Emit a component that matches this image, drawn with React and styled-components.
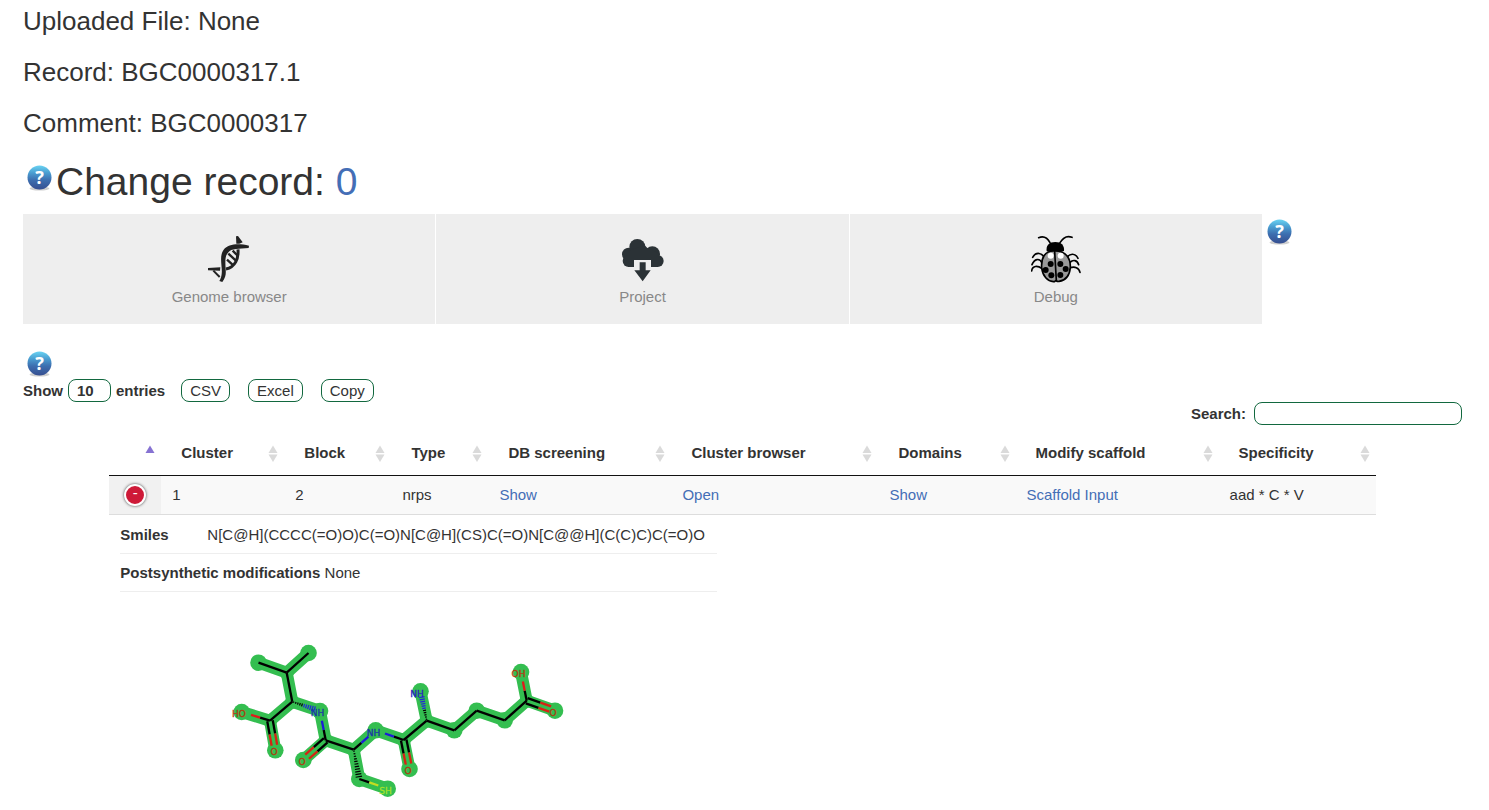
import React from "react";
import styled, { createGlobalStyle } from "styled-components";

const GlobalStyle = createGlobalStyle`
  *, *::before, *::after { box-sizing: border-box; }
  body {
    margin: 0;
    background: #fff;
    color: #333;
    font-family: "Liberation Sans", Arial, sans-serif;
    font-size: 15px;
    line-height: 22px;
  }
  button, input, select { font: inherit; color: inherit; }
`;

const Page = styled.main`
  padding: 7px 27px 0 23px;
`;

const RecordLine = styled.h3`
  margin: 0 0 22px;
  font-size: 26px;
  line-height: 29px;
  font-weight: 400;
`;

const ChangeRecord = styled.div`
  display: flex;
  align-items: flex-start;
  padding: 0 0 10px 4px;
`;

const ChangeTitle = styled.h1`
  margin: 0 0 0 4px;
  font-size: 39px;
  line-height: 44px;
  font-weight: 400;
`;

const Link = styled.a`
  color: #446eb6;
  text-decoration: none;
`;

const HelpButton = styled.button`
  display: block;
  width: 25px;
  height: 26px;
  padding: 0;
  border: 0;
  background: none;
  margin-top: ${(p) => p.$top || 0}px;
  svg { display: block; }
`;

const TileBar = styled.div`
  display: flex;
`;

const Tiles = styled.nav`
  flex: 1;
  display: grid;
  grid-template-columns: repeat(3, 1fr);
  gap: 1px;
`;

const TileAside = styled.div`
  width: 200px;
  padding-left: 5px;
`;

const Tile = styled.a`
  display: flex;
  flex-direction: column;
  align-items: center;
  height: 110px;
  padding-top: 20px;
  background: #eee;
  color: #888;
  text-decoration: none;
  svg { display: block; margin-bottom: 2px; }
`;

const TableHelp = styled.div`
  padding: 27px 0 2px 4px;
`;

const Controls = styled.div`
  display: flex;
  align-items: center;
`;

const LengthLabel = styled.label`
  display: flex;
  align-items: center;
  gap: 5px;
  margin-right: 16px;
  font-weight: 700;
`;

const LengthSelect = styled.select`
  appearance: none;
  width: 43px;
  height: 23px;
  padding: 0 8px;
  border: 1px solid #12683f;
  border-radius: 8px;
  background: #fff;
`;

const ExportButtons = styled.div`
  display: flex;
  gap: 18px;
`;

const ExportButton = styled.button`
  height: 23px;
  padding: 0 8px;
  border: 1px solid #12683f;
  border-radius: 8px;
  background: #fff;
  line-height: 21px;
`;

const SearchRow = styled.div`
  display: flex;
  justify-content: flex-end;
`;

const SearchLabel = styled.label`
  display: flex;
  align-items: center;
  gap: 8px;
  font-weight: 700;
`;

const SearchInput = styled.input`
  width: 208px;
  height: 23px;
  padding: 0 8px;
  border: 1px solid #12683f;
  border-radius: 8px;
  background: #fff;
`;

const ClusterTable = styled.table`
  width: 88%;
  margin: 6px auto 0;
  table-layout: fixed;
  border-collapse: separate;
  border-spacing: 0;
`;

const HeadCell = styled.th`
  height: 45px;
  padding: 0 6px 0 20px;
  border-bottom: 1px solid #111;
  text-align: left;
`;

const SortButton = styled.button`
  display: flex;
  justify-content: space-between;
  align-items: center;
  width: 100%;
  padding: 0;
  border: 0;
  background: none;
  font-weight: 700;
  text-align: left;
  white-space: nowrap;
`;

const Cell = styled.td`
  height: 39px;
  padding: ${(p) => (p.$toggle ? "0 15px" : "0 11px")};
  border-bottom: 1px solid #ddd;
  background: ${(p) => (p.$toggle ? "#f1f1f1" : "#f9f9f9")};
  white-space: nowrap;
`;

const ToggleButton = styled.button`
  display: block;
  width: 22px;
  height: 22px;
  padding: 0 0 5px;
  border: 2px solid #fff;
  border-radius: 50%;
  background: #ce1a38;
  box-shadow: 0 0 3px #444;
  color: #fff;
  font-size: 15px;
  line-height: 12px;
`;

const DetailCell = styled.td`
  padding: 1px 11px 0;
`;

const DetailTable = styled.table`
  width: 597px;
  border-collapse: separate;
  border-spacing: 0;
`;

const DetailItem = styled.td`
  height: 38px;
  padding: 0;
  border-bottom: 1px solid #eee;
  white-space: nowrap;
`;

const DetailName = styled.th`
  height: 38px;
  width: 87px;
  padding: 0;
  border-bottom: 1px solid #eee;
  text-align: left;
`;

const Molecule = styled.svg`
  display: block;
  margin-top: 38px;
`;

function Help({ id, top }) {
  return (
    <HelpButton type="button" aria-label="Help" $top={top}>
      <svg width="25" height="26" viewBox="0 0 25 26">
        <defs>
          <linearGradient id={id} x1="0" y1="0" x2="0" y2="1">
            <stop offset="0" stopColor="#69d3f2" />
            <stop offset="0.3" stopColor="#4b9fd2" />
            <stop offset="0.6" stopColor="#3d6fb0" />
            <stop offset="1" stopColor="#364e90" />
          </linearGradient>
        </defs>
        <ellipse cx="12.5" cy="23.5" rx="10" ry="2" fill="#bbb" opacity="0.7" />
        <circle cx="12.5" cy="12.5" r="12" fill={`url(#${id})`} />
        <text x="12.5" y="19" textAnchor="middle" fill="#fff" fontFamily="Noto Sans, sans-serif" fontWeight="700" fontSize="18">?</text>
      </svg>
    </HelpButton>
  );
}

function DnaIcon() {
  return (
    <svg width="50" height="50" viewBox="72 72 150 150" fill="none" stroke="#222">
      <path d="M168 79L174 78L188 97L178 101L169 101Z" fill="#222" stroke="none" />
      <path d="M84 174L121 172L120 182L84 181Z" fill="#222" stroke="none" />
      <path d="M100 182L119 201" strokeWidth="6" />
      <path d="M174 118C176 145 166 172 138 177" strokeWidth="9" />
      <path d="M141 149L160 166M145 131L167 151M158 122L174 138" strokeWidth="7" />
      <path d="M207 107C174 99 145 102 131 119C116 139 128 171 125 192C124 202 121 208 118 213L127 216C138 201 138 191 137 176C135 149 136 137 144 128C154 114 178 117 206 114Z" fill="#222" stroke="none" />
    </svg>
  );
}

function CloudIcon() {
  return (
    <svg width="50" height="50" viewBox="51 44 150 150" fill="#2b3236">
      <circle cx="112" cy="83" r="24" />
      <circle cx="86" cy="105" r="20" />
      <circle cx="86" cy="125" r="18" />
      <circle cx="157" cy="104" r="23" />
      <circle cx="173" cy="125" r="18" />
      <path d="M84 94L134 78L142 86L174 100V143H84Z" />
      <path d="M102 122H153V144H102Z" fill="#eee" />
      <path d="M119 129H137V153H152L128 186L103 153H119Z" />
    </svg>
  );
}

function BugIcon() {
  return (
    <svg width="50" height="50" viewBox="64 42 150 150" fill="none" stroke="#000" strokeWidth="5" strokeLinecap="round">
      <path d="M87 53C101 47 113 53 121 68M187 52C173 46 160 53 151 68" />
      <path d="M105 113C97 100 80 93 69 112M97 129C90 113 74 116 67 134M97 146C84 136 68 136 66 153" />
      <path d="M171 113C181 99 197 99 205 115M181 127C190 118 203 120 207 134M180 144C195 138 208 143 211 157" />
      <path d="M111 94C108 76 119 66 137 66C154 66 165 76 163 93C145 99 130 99 111 94Z" fill="#000" stroke="none" />
      <path d="M135 93C105 91 94 115 96 143C99 169 114 184 131 185C137 185 136 182 139 182C141 182 142 186 148 184C168 181 180 165 182 142C183 116 169 92 135 93Z" fill="#999" />
      <path d="M135 94L140 182" />
      <g stroke="none" fill="#fff"><circle cx="123" cy="107" r="9" /><circle cx="153" cy="107" r="9" /></g>
      <g stroke="none" fill="#000">
        <circle cx="123" cy="132" r="9" /><circle cx="152" cy="132" r="9" />
        <circle cx="108" cy="150" r="9" /><circle cx="168" cy="147" r="9" />
        <circle cx="125" cy="166" r="9" /><circle cx="152" cy="165" r="9" />
      </g>
    </svg>
  );
}

function SortArrows({ ascending }) {
  return (
    <svg width="10" height="17" viewBox="0 0 10 17" aria-hidden="true">
      <path d="M0.5 8L5 0.5L9.5 8Z" fill={ascending ? "#8672d2" : "#dadada"} />
      {!ascending && <path d="M0.5 9.5L5 17L9.5 9.5Z" fill="#dadada" />}
    </svg>
  );
}

const atoms = {
  me1: [258.5, 662.7], me2: [308.5, 653], ch: [286.7, 672.7], ca1: [292.3, 701.7],
  c1: [270, 720.7], oh1: [241.7, 712], o1: [275.3, 750.3], n1: [320, 711],
  c2: [325.7, 740.3], o2: [303.3, 760], ca2: [353.7, 749.7], n2: [375.7, 730.3],
  cb: [359.3, 779], sh: [387.7, 788.7], c3: [403.7, 740], o3: [409.5, 769],
  ca3: [426.7, 720.7], n3: [420.5, 691.3], d1: [454.3, 730.3], d2: [476.7, 710.7],
  d3: [504.7, 720.3], c4: [526.7, 700.7], oh4: [521, 672], o4: [555, 710.7],
};

const bonds = [
  ["me1", "ch"], ["me2", "ch"], ["ch", "ca1"], ["ca1", "c1"], ["c1", "oh1", "label", "#e01b1b"],
  ["c1", "o1", "double"], ["ca1", "n1", "hash", "#2222dd"], ["c2", "n1", "label", "#1c1cd8"],
  ["c2", "o2", "double"], ["c2", "ca2"], ["ca2", "n2", "label", "#1c1cd8"], ["ca2", "cb", "hash", "#000"],
  ["cb", "sh", "label", "#c5dd22"], ["c3", "n2", "label", "#1c1cd8"], ["c3", "o3", "double"],
  ["c3", "ca3"], ["ca3", "n3", "hash", "#2222dd"], ["ca3", "d1"], ["d1", "d2"], ["d2", "d3"],
  ["d3", "c4"], ["c4", "oh4", "label", "#e01b1b"], ["c4", "o4", "double"],
];

const largeHalos = ["me1", "me2", "oh1", "o1", "n1", "o2", "n2", "cb", "sh", "o3", "n3", "d1", "d2", "d3", "oh4", "o4"];

const atomLabels = [
  ["HO", 239, 717, "#b03a10"], ["O", 274, 755, "#b03a10"], ["NH", 317.5, 716, "#1a35a8"],
  ["O", 302, 765, "#b03a10"], ["NH", 373.5, 736, "#1a35a8"], ["SH", 385.5, 794, "#a4e02a"],
  ["O", 408, 774, "#b03a10"], ["NH", 417, 697, "#2b22c0"], ["OH", 518.5, 677, "#b03a10"],
  ["O", 553, 716, "#b03a10"],
];

function Segment({ a, b, from, to, shift = 0, color }) {
  const dx = b[0] - a[0];
  const dy = b[1] - a[1];
  const len = Math.hypot(dx, dy);
  const ox = (-dy / len) * shift;
  const oy = (dx / len) * shift;
  return (
    <line x1={a[0] + dx * from + ox} y1={a[1] + dy * from + oy}
      x2={a[0] + dx * to + ox} y2={a[1] + dy * to + oy} stroke={color} />
  );
}

function Bond({ bond }) {
  const [start, end, kind, color] = bond;
  const a = atoms[start];
  const b = atoms[end];
  if (kind === "hash") {
    const len = Math.hypot(b[0] - a[0], b[1] - a[1]);
    const reach = color === "#000" ? 0.92 : 0.8;
    const ux = (b[0] - a[0]) / len;
    const uy = (b[1] - a[1]) / len;
    return Array.from({ length: 11 }, (_, i) => {
      const t = 0.05 + (i / 10) * (reach - 0.05);
      const half = 0.5 + t * 3;
      const x = a[0] + ux * len * t;
      const y = a[1] + uy * len * t;
      return (
        <line key={i} x1={x - uy * half} y1={y + ux * half} x2={x + uy * half} y2={y - ux * half}
          stroke={t > 0.4 ? color : "#000"} strokeWidth="1.2" />
      );
    });
  }
  if (kind === "double") {
    return [-2.8, 2.8].map((shift) => (
      <React.Fragment key={shift}>
        <Segment a={a} b={b} from={0} to={0.45} shift={shift} color="#000" />
        <Segment a={a} b={b} from={0.45} to={0.83} shift={shift} color="#d62314" />
      </React.Fragment>
    ));
  }
  if (kind === "label") {
    return (
      <>
        <Segment a={a} b={b} from={0} to={0.35} color="#000" />
        <Segment a={a} b={b} from={0.35} to={0.67} color={color} />
      </>
    );
  }
  return <Segment a={a} b={b} from={0} to={1} color="#000" />;
}

function MoleculeDrawing() {
  return (
    <Molecule width="450" height="180" viewBox="120 630 450 180" role="img" aria-label="Molecule structure">
      <g strokeWidth="12" strokeLinecap="round">
        {bonds.map((bond) => (
          <Segment key={bond[0] + bond[1]} a={atoms[bond[0]]} b={atoms[bond[1]]} from={0} to={1} color="#34be50" />
        ))}
      </g>
      <g fill="#34be50">
        {Object.entries(atoms).map(([name, [x, y]]) => (
          <circle key={name} cx={x} cy={y} r={largeHalos.includes(name) ? 8.3 : 7} />
        ))}
      </g>
      <g strokeWidth="2.3" strokeLinecap="butt">
        {bonds.map((bond) => <Bond key={bond[0] + bond[1]} bond={bond} />)}
      </g>
      <g fontFamily="DejaVu Sans, sans-serif" fontSize="9" textAnchor="middle">
        {atomLabels.map(([text, x, y, fill]) => (
          <text key={text + x} x={x} y={y} fill={fill} stroke={fill} strokeWidth="0.3">{text}</text>
        ))}
      </g>
    </Molecule>
  );
}

const columns = [
  ["", 52], ["Cluster", 123], ["Block", 107], ["Type", 97], ["DB screening", 183],
  ["Cluster browser", 207], ["Domains", 137], ["Modify scaffold", 203], ["Specificity", 157],
];

export default function App() {
  return (
    <>
      <GlobalStyle />
      <Page>
        <RecordLine>Uploaded File: None</RecordLine>
        <RecordLine>Record: BGC0000317.1</RecordLine>
        <RecordLine>Comment: BGC0000317</RecordLine>
        <ChangeRecord>
          <Help id="help-record" top={5} />
          <ChangeTitle>Change record: <Link href="#record-0">0</Link></ChangeTitle>
        </ChangeRecord>
        <TileBar>
          <Tiles>
            <Tile href="#genome"><DnaIcon />Genome browser</Tile>
            <Tile href="#project"><CloudIcon />Project</Tile>
            <Tile href="#debug"><BugIcon />Debug</Tile>
          </Tiles>
          <TileAside><Help id="help-tiles" top={5} /></TileAside>
        </TileBar>
        <TableHelp><Help id="help-table" /></TableHelp>
        <Controls>
          <LengthLabel>
            Show
            <LengthSelect defaultValue="10">
              <option>10</option>
              <option>25</option>
              <option>50</option>
            </LengthSelect>
            entries
          </LengthLabel>
          <ExportButtons>
            <ExportButton type="button">CSV</ExportButton>
            <ExportButton type="button">Excel</ExportButton>
            <ExportButton type="button">Copy</ExportButton>
          </ExportButtons>
        </Controls>
        <SearchRow>
          <SearchLabel>Search: <SearchInput type="search" /></SearchLabel>
        </SearchRow>
        <ClusterTable>
          <colgroup>
            {columns.map(([name, width]) => <col key={name} width={width} />)}
          </colgroup>
          <thead>
            <tr>
              {columns.map(([name]) => (
                <HeadCell key={name} scope="col">
                  <SortButton type="button" aria-label={name || "Details"}>
                    <span>{name}</span>
                    <SortArrows ascending={!name} />
                  </SortButton>
                </HeadCell>
              ))}
            </tr>
          </thead>
          <tbody>
            <tr>
              <Cell $toggle><ToggleButton type="button" aria-label="Hide details">-</ToggleButton></Cell>
              <Cell>1</Cell>
              <Cell>2</Cell>
              <Cell>nrps</Cell>
              <Cell><Link href="#screening">Show</Link></Cell>
              <Cell><Link href="#cluster">Open</Link></Cell>
              <Cell><Link href="#domains">Show</Link></Cell>
              <Cell><Link href="#scaffold">Scaffold Input</Link></Cell>
              <Cell>aad * C * V</Cell>
            </tr>
            <tr>
              <DetailCell colSpan={9}>
                <DetailTable>
                  <tbody>
                    <tr>
                      <DetailName scope="row">Smiles</DetailName>
                      <DetailItem>N[C@H](CCCC(=O)O)C(=O)N[C@H](CS)C(=O)N[C@@H](C(C)C)C(=O)O</DetailItem>
                    </tr>
                    <tr>
                      <DetailItem colSpan={2}><b>Postsynthetic modifications</b> None</DetailItem>
                    </tr>
                  </tbody>
                </DetailTable>
                <MoleculeDrawing />
              </DetailCell>
            </tr>
          </tbody>
        </ClusterTable>
      </Page>
    </>
  );
}
